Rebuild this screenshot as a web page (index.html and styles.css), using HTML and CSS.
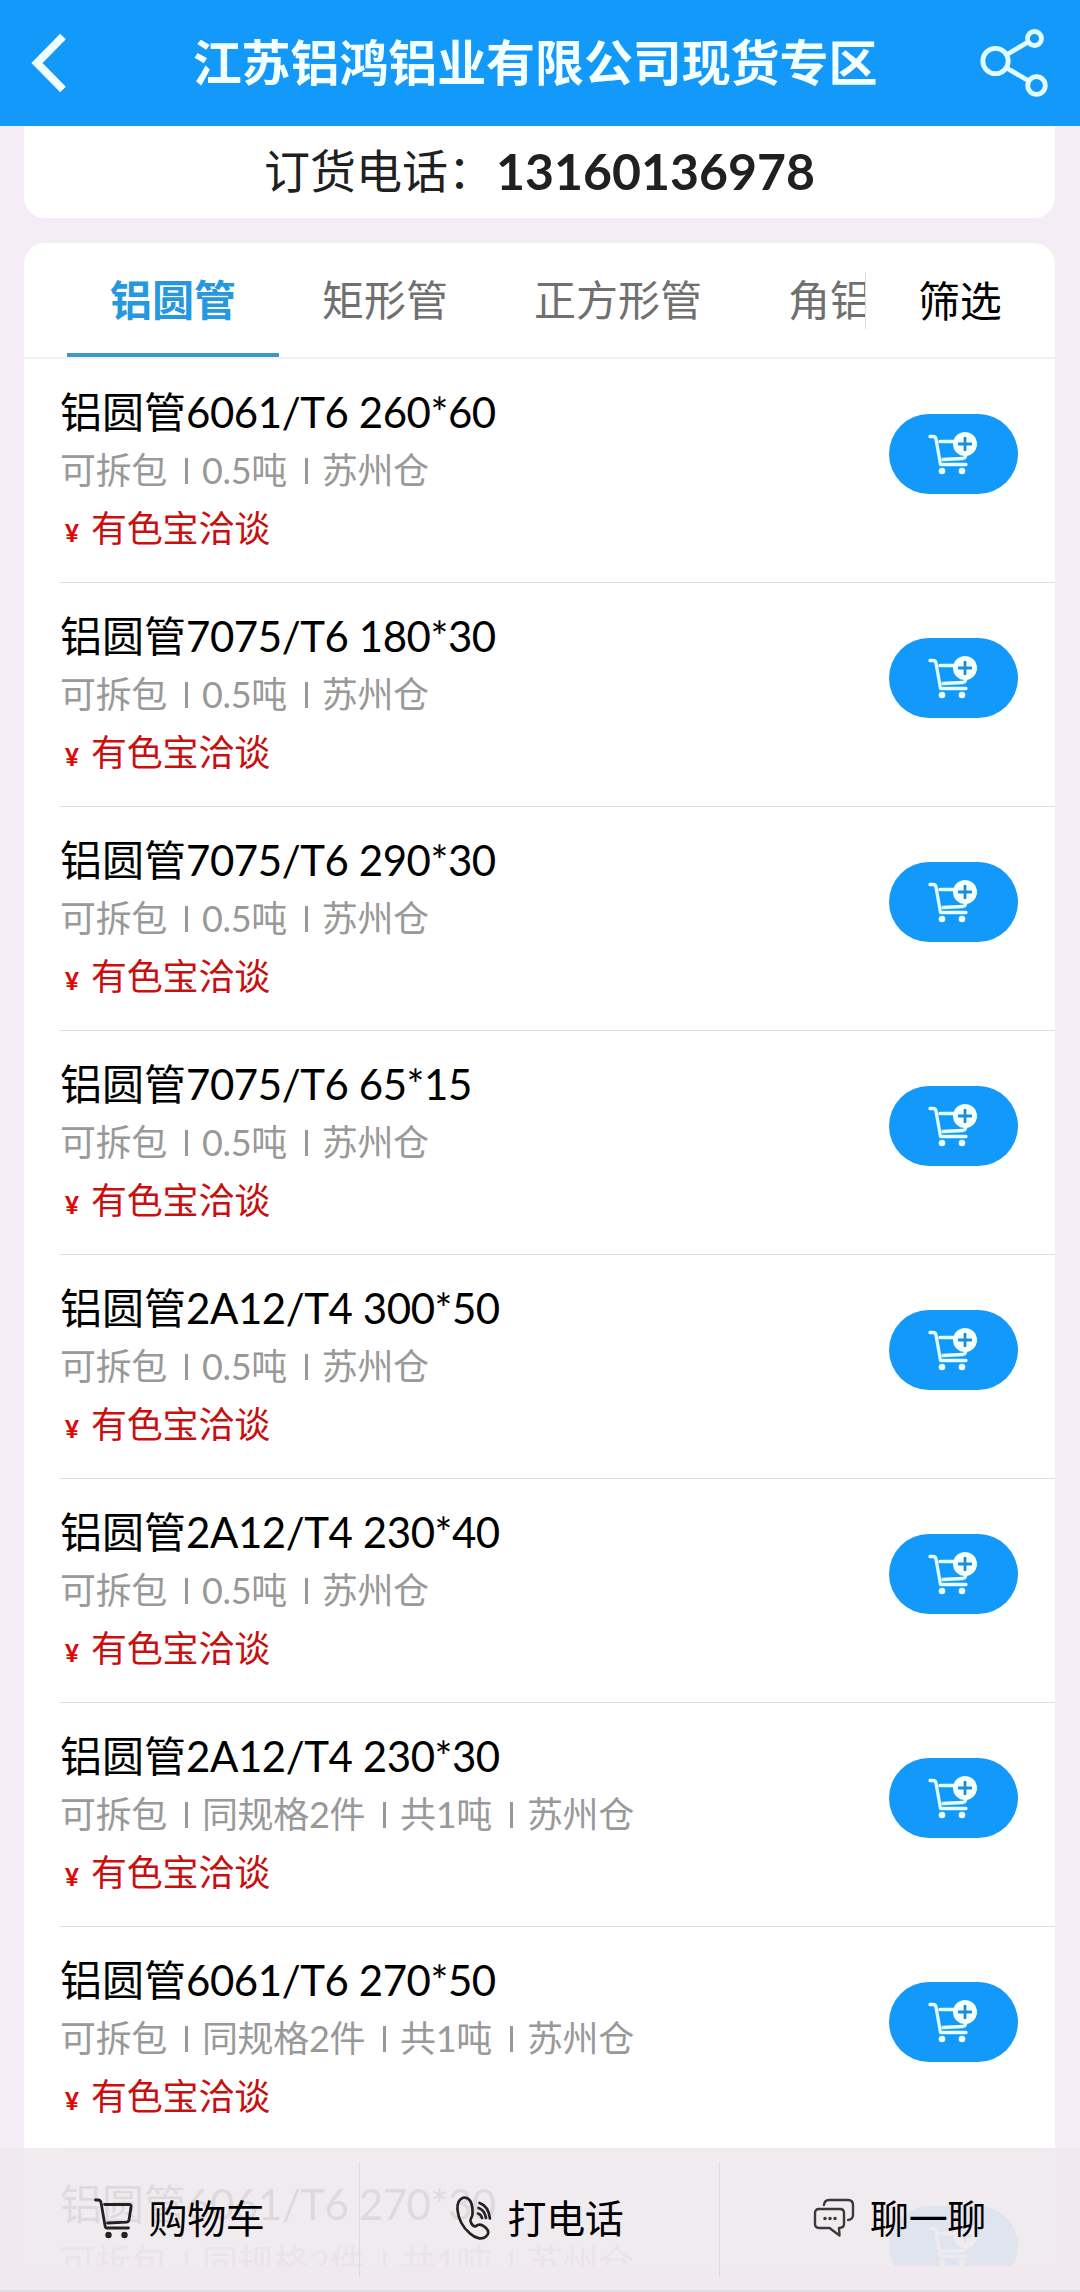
FILE: index.html
```html
<!DOCTYPE html>
<html lang="zh-CN">
<head>
<meta charset="utf-8">
<title>江苏铝鸿铝业有限公司现货专区</title>
<link rel="stylesheet" href="styles.css">
</head>
<body>
<svg class="defs" width="0" height="0">
  <symbol id="cart-add" viewBox="0 0 50 44">
    <path d="M2 4.500h3q2.500 0 3 2.500l4.500 25.500h25.500M12 9.500h17M15 27.500l20-1q2.500-.5 3-4" fill="none" stroke="#e4fdff" stroke-width="3.300" stroke-linecap="round" stroke-linejoin="round"/>
    <circle cx="14" cy="39" r="3.300" fill="#e4fdff"/><circle cx="34" cy="39" r="3.300" fill="#e4fdff"/>
    <circle cx="37" cy="12" r="12" fill="#f4ffff"/>
    <path d="M37 5v14M30 12h14" stroke="#1b8fdc" stroke-width="2.800"/>
  </symbol>
</svg>
<div class="screen">
  <header class="header">
    <svg class="back" width="36" height="60" viewBox="0 0 36 60"><path d="M32 3.500L6 30l26 26.500" fill="none" stroke="#f2ffff" stroke-width="8"/></svg>
    <h1 class="header-title">江苏铝鸿铝业有限公司现货专区</h1>
    <svg class="share" width="70" height="72" viewBox="0 0 70 72"><g fill="none" stroke="#e2fbff" stroke-width="4.800"><circle cx="17.500" cy="34" r="12.700"/><circle cx="56.500" cy="11.500" r="7"/><circle cx="58.500" cy="58.500" r="8.800"/><path d="M29 27.500L50 15M28.500 41L51 54"/></g></svg>
  </header>
  <main class="content">
    <section class="phone-card"><span class="phone-label">订货电话：</span><b class="phone-number">13160136978</b></section>
    <section class="goods">
      <nav class="tabs">
        <div class="tab-strip">
          <a class="tab active">铝圆管</a><a class="tab">矩形管</a><a class="tab">正方形管</a><a class="tab">角铝</a>
        </div>
        <a class="filter">筛选</a>
      </nav>
      <ul class="list">
        <li class="item"><div class="info"><h2 class="name">铝圆管<span class="code">6061/T6 260*60</span></h2><p class="spec">可拆包<i class="sep"></i>0.5吨<i class="sep"></i>苏州仓</p><p class="price"><span class="yen">¥</span>有色宝洽谈</p></div><a class="add"><svg width="50" height="44"><use href="#cart-add"/></svg></a></li>
        <li class="item"><div class="info"><h2 class="name">铝圆管<span class="code">7075/T6 180*30</span></h2><p class="spec">可拆包<i class="sep"></i>0.5吨<i class="sep"></i>苏州仓</p><p class="price"><span class="yen">¥</span>有色宝洽谈</p></div><a class="add"><svg width="50" height="44"><use href="#cart-add"/></svg></a></li>
        <li class="item"><div class="info"><h2 class="name">铝圆管<span class="code">7075/T6 290*30</span></h2><p class="spec">可拆包<i class="sep"></i>0.5吨<i class="sep"></i>苏州仓</p><p class="price"><span class="yen">¥</span>有色宝洽谈</p></div><a class="add"><svg width="50" height="44"><use href="#cart-add"/></svg></a></li>
        <li class="item"><div class="info"><h2 class="name">铝圆管<span class="code">7075/T6 65*15</span></h2><p class="spec">可拆包<i class="sep"></i>0.5吨<i class="sep"></i>苏州仓</p><p class="price"><span class="yen">¥</span>有色宝洽谈</p></div><a class="add"><svg width="50" height="44"><use href="#cart-add"/></svg></a></li>
        <li class="item"><div class="info"><h2 class="name">铝圆管<span class="code">2A12/T4 300*50</span></h2><p class="spec">可拆包<i class="sep"></i>0.5吨<i class="sep"></i>苏州仓</p><p class="price"><span class="yen">¥</span>有色宝洽谈</p></div><a class="add"><svg width="50" height="44"><use href="#cart-add"/></svg></a></li>
        <li class="item"><div class="info"><h2 class="name">铝圆管<span class="code">2A12/T4 230*40</span></h2><p class="spec">可拆包<i class="sep"></i>0.5吨<i class="sep"></i>苏州仓</p><p class="price"><span class="yen">¥</span>有色宝洽谈</p></div><a class="add"><svg width="50" height="44"><use href="#cart-add"/></svg></a></li>
        <li class="item"><div class="info"><h2 class="name">铝圆管<span class="code">2A12/T4 230*30</span></h2><p class="spec">可拆包<i class="sep"></i>同规格2件<i class="sep"></i>共1吨<i class="sep"></i>苏州仓</p><p class="price"><span class="yen">¥</span>有色宝洽谈</p></div><a class="add"><svg width="50" height="44"><use href="#cart-add"/></svg></a></li>
        <li class="item"><div class="info"><h2 class="name">铝圆管<span class="code">6061/T6 270*50</span></h2><p class="spec">可拆包<i class="sep"></i>同规格2件<i class="sep"></i>共1吨<i class="sep"></i>苏州仓</p><p class="price"><span class="yen">¥</span>有色宝洽谈</p></div><a class="add"><svg width="50" height="44"><use href="#cart-add"/></svg></a></li>
        <li class="item"><div class="info"><h2 class="name">铝圆管<span class="code">6061/T6 270*30</span></h2><p class="spec">可拆包<i class="sep"></i>同规格2件<i class="sep"></i>共1吨<i class="sep"></i>苏州仓</p></div><a class="add"><svg width="50" height="44"><use href="#cart-add"/></svg></a></li>
      </ul>
    </section>
  </main>
  <footer class="bar">
    <a class="action"><svg width="40" height="42" viewBox="0 0 40 42" fill="none" stroke="#222" stroke-width="2.800" stroke-linecap="round" stroke-linejoin="round"><path d="M1.500 3h2.500q2.500 0 3 2.500l4 23q.3 2.500 2 2.500H34.500M10.500 7.500H35q2.500 0 2 2.500l-2 13q-.4 2-2.500 2.200L13.500 26"/><circle cx="14.500" cy="38" r="1.800" fill="#222"/><circle cx="30.500" cy="38" r="1.800" fill="#222"/></svg><span>购物车</span></a>
    <a class="action call"><svg width="38" height="46" viewBox="0 0 38 46" fill="none" stroke="#222" stroke-width="2.700" stroke-linecap="round" stroke-linejoin="round"><path d="M8 2.800C3.500 4.500 2 9 2.500 15c1 10 6 18 12.500 23.500 5.500 5 12 6.500 16 3 3-2.500 3-5.500 0-8.500-3.500-3.500-7-4.500-10-2-2.500 1.500-5-2.500-5.500-5-.3-3 2-3.500 2-7 0-5 .5-10-3-14-1.500-2-4-2.800-6.500-2.200z"/><path d="M23 18.500q3 .7 4 4.500M23.500 13q6 2 7.500 10M24.500 8q9 3 10.500 15.500"/></svg><span>打电话</span></a>
    <a class="action chat"><svg width="42" height="42" viewBox="0 0 42 42" fill="none" stroke="#3a3a3a" stroke-width="2.400" stroke-linecap="round" stroke-linejoin="round"><path d="M11 8q.5-5 5-5h19q5 0 5 5v10q0 4.500-5 5"/><path d="M6 12h21q4 0 4 4v11q0 4-5 4l.5 7.500-10-7.500H6q-4 0-4-4V16q0-4 4-4z"/><path d="M12 21.500h.01M17 21.500h.01M22 21.500h.01" stroke-width="3.600"/></svg><span>聊一聊</span></a>
  </footer>
</div>
</body>
</html>
```
FILE: styles.css
```css
* { box-sizing: border-box; }
html, body, h1, h2, p, ul { margin: 0; padding: 0; }
body { font-family: Lato, "Noto Sans CJK SC", sans-serif; color: #000; }
.defs { display: none; }
svg { display: block; }
.screen { width: 1080px; height: 2292px; background: #f5edf6; display: flex; flex-direction: column; position: relative; overflow: hidden; }
.header { height: 126px; flex: none; background: #1299fa; display: flex; align-items: center; justify-content: space-between; padding: 0 32px 0 31px; }
.header-title { font-size: 49px; line-height: 70px; font-weight: 700; color: #f4ffff; letter-spacing: -0.1px; margin-left: 25px; padding-bottom: 2px; }
.content { height: 2140px; flex: none; overflow: hidden; padding: 0 25px 0 24px; display: flex; flex-direction: column; gap: 25px; }
.phone-card { height: 92px; flex: none; background: #fff; border-radius: 0 0 21px 21px; display: flex; align-items: center; justify-content: center; color: #202020; line-height: 60px; padding-bottom: 3px; }
.phone-label { font-size: 46px; width: 232px; }
.phone-number { font-size: 50px; }
.goods { flex: none; background: #fff; border-radius: 21px 21px 0 0; }
.tabs { height: 116px; display: flex; align-items: center; border-bottom: 2px solid #f1f1f1; font-size: 42px; line-height: 60px; }
.tab-strip { width: 841px; height: 114px; padding-left: 43px; display: flex; overflow: hidden; position: relative; }
.tab { flex: none; padding: 27px 43px 0; color: #707070; border-bottom: 4px solid transparent; height: 114px; white-space: nowrap; }
.tab.active { color: #2598e0; font-weight: 700; border-color: #3c97cc; }
.filter { border-left: 1px solid #ddd; height: 57px; line-height: 58px; padding-left: 52px; letter-spacing: -0.3px; }
.list { list-style: none; }
.item { height: 224px; margin-left: 36px; padding-right: 37px; border-bottom: 1px solid #ddd; display: flex; align-items: flex-start; justify-content: space-between; }
.info { padding-top: 23px; }
.name { font-size: 42px; font-weight: 400; line-height: 60px; }
.code { letter-spacing: -0.45px; }
.spec { font-size: 36px; line-height: 56px; letter-spacing: -0.35px; color: #999; display: flex; align-items: center; }
.sep { width: 3px; height: 26px; background: #999; margin: 2px 14px 0 18px; }
.price { font-size: 36px; line-height: 60px; letter-spacing: -0.2px; color: #c8100f; display: flex; }
.yen { font-size: 24px; font-weight: 900; width: 31px; padding-left: 5px; padding-top: 5px; color: #d80c0c; }
.add { width: 129px; height: 80px; margin-top: 55px; border-radius: 40px; background: #1299fa; display: flex; padding: 18px 0 0 39px; }
.bar { position: absolute; left: 0; right: 0; bottom: 0; height: 144px; background: rgba(239, 234, 238, .93); border-bottom: 2px solid #dfdce3; display: flex; align-items: center; }
.action { width: 360px; height: 115px; padding: 0 1px 2px 0; display: flex; align-items: center; justify-content: center; gap: 15px; font-size: 39px; line-height: 60px; letter-spacing: -0.4px; border-right: 1px solid #dfdade; }
.action:last-child { border-right: 0; }
```
